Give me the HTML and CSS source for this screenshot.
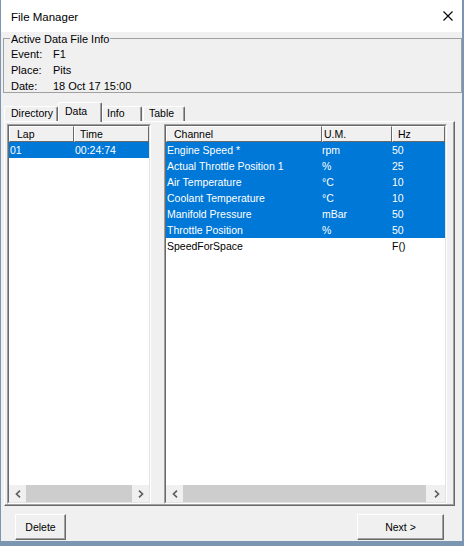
FILE: index.html
```html
<!DOCTYPE html>
<html>
<head>
<meta charset="utf-8">
<link rel="stylesheet" href="styles.css">
</head>
<body>
<div class="win">
  <div class="titlebar">
    <span class="title">File Manager</span>
    <svg class="close" width="10" height="10" viewBox="0 0 10 10"><path d="M0.5 0.5 L9.5 9.5 M9.5 0.5 L0.5 9.5" stroke="#000" stroke-width="1.1" fill="none"/></svg>
  </div>

  <div class="group">
    <span class="legend">Active Data File Info</span>
    <div class="info-row"><span class="lbl">Event:</span><span>F1</span></div>
    <div class="info-row"><span class="lbl">Place:</span><span>Pits</span></div>
    <div class="info-row"><span class="lbl">Date:</span><span>18 Oct 17 15:00</span></div>
  </div>

  <div class="tabs">
    <div class="tab t-dir">Directory</div>
    <div class="tab t-data sel">Data</div>
    <div class="tab t-info">Info</div>
    <div class="tab t-table">Table</div>
  </div>

  <div class="panel">
    <div class="list list-laps">
      <div class="list-in">
        <div class="lhead">
          <div class="hc hc-lap">Lap</div>
          <div class="hc hc-time">Time</div>
        </div>
        <div class="lbody">
          <div class="row sel"><span class="c-lap">01</span><span class="c-time">00:24:74</span></div>
        </div>
        <div class="hscroll">
          <div class="arrow"><svg width="6" height="8" viewBox="0 0 6 8"><polyline points="5,0.7 1.5,4 5,7.3" fill="none" stroke="#606060" stroke-width="1.7"/></svg></div>
          <div class="thumb"></div>
          <div class="arrow"><svg width="6" height="8" viewBox="0 0 6 8"><polyline points="1,0.7 4.5,4 1,7.3" fill="none" stroke="#606060" stroke-width="1.7"/></svg></div>
        </div>
      </div>
    </div>

    <div class="list list-ch">
      <div class="list-in">
        <div class="lhead">
          <div class="hc hc-ch">Channel</div>
          <div class="hc hc-um">U.M.</div>
          <div class="hc hc-hz">Hz</div>
        </div>
        <div class="lbody">
          <div class="row sel"><span class="c-ch">Engine Speed *</span><span class="c-um">rpm</span><span class="c-hz">50</span></div>
          <div class="row sel"><span class="c-ch">Actual Throttle Position 1</span><span class="c-um">%</span><span class="c-hz">25</span></div>
          <div class="row sel"><span class="c-ch">Air Temperature</span><span class="c-um">°C</span><span class="c-hz">10</span></div>
          <div class="row sel"><span class="c-ch">Coolant Temperature</span><span class="c-um">°C</span><span class="c-hz">10</span></div>
          <div class="row sel"><span class="c-ch">Manifold Pressure</span><span class="c-um">mBar</span><span class="c-hz">50</span></div>
          <div class="row sel"><span class="c-ch">Throttle Position</span><span class="c-um">%</span><span class="c-hz">50</span></div>
          <div class="row"><span class="c-ch">SpeedForSpace</span><span class="c-um"></span><span class="c-hz">F()</span></div>
        </div>
        <div class="hscroll">
          <div class="arrow"><svg width="6" height="8" viewBox="0 0 6 8"><polyline points="5,0.7 1.5,4 5,7.3" fill="none" stroke="#606060" stroke-width="1.7"/></svg></div>
          <div class="thumb thumb-ch"></div>
          <div class="arrow"><svg width="6" height="8" viewBox="0 0 6 8"><polyline points="1,0.7 4.5,4 1,7.3" fill="none" stroke="#606060" stroke-width="1.7"/></svg></div>
        </div>
      </div>
    </div>
  </div>

  <div class="buttons">
    <button class="btn btn-delete">Delete</button>
    <button class="btn btn-next">Next &gt;</button>
  </div>
</div>
</body>
</html>
```

FILE: styles.css
```css
html, body {
  margin: 0;
  padding: 0;
  background: #f0f0f0;
}

.win {
  width: 464px;
  height: 546px;
  box-sizing: border-box;
  border-left: 1px solid #7a96b0;
  border-right: 2px solid #7a96b0;
  border-bottom: 5px solid #7a96b0;
  background: #f0f0f0;
  display: flex;
  flex-direction: column;
  font-family: "Liberation Sans", Arial, sans-serif;
  color: #000;
}

/* title bar */
.titlebar {
  height: 32px;
  flex: none;
  background: #fff;
  display: flex;
  align-items: center;
  justify-content: space-between;
  padding: 0 9px 0 10px;
}
.title {
  font-size: 11.5px;
  line-height: 14px;
  padding-top: 1px;
}
.close {
  display: block;
  margin-top: -1px;
}

/* group box */
.group {
  position: relative;
  flex: none;
  margin: 6px 0 0 2px;
  height: 55px;
  box-sizing: border-box;
  border: 1px solid #a0a0a0;
  padding: 7px 0 0 7px;
  font-size: 11px;
}
.legend {
  position: absolute;
  top: -6px;
  left: 6px;
  padding: 0 1px;
  line-height: 13px;
  background: #f0f0f0;
}
.info-row {
  display: flex;
  line-height: 16px;
  height: 16px;
}
.lbl {
  width: 42px;
}

/* tabs */
.tabs {
  flex: none;
  display: flex;
  align-items: flex-end;
  height: 19px;
  margin: 9px 0 0 3px;
  font-size: 10.5px;
}
.tab {
  box-sizing: border-box;
  height: 15px;
  line-height: 13px;
  border-top: 1px solid #fff;
  border-left: 1px solid #fff;
  border-right: 1px solid #696969;
  box-shadow: inset -1px 0 #a0a0a0;
  border-radius: 2px 2px 0 0;
  background: #f0f0f0;
}
.tab.sel {
  position: relative;
  z-index: 1;
  height: 20px;
  margin-bottom: -1px;
  line-height: 17px;
}
.t-dir { width: 54px; padding-left: 6px; }
.t-data { width: 44px; padding-left: 6px; }
.t-info { width: 40px; padding-left: 4px; }
.t-table { width: 42px; padding-left: 5px; margin-left: 1px; }

/* panel */
.panel {
  flex: none;
  box-sizing: border-box;
  width: 451px;
  height: 385px;
  margin-left: 3px;
  border-top: 1px solid #fff;
  border-left: 1px solid #fff;
  border-right: 1px solid #696969;
  border-bottom: 1px solid #696969;
  box-shadow: inset -1px -1px #a0a0a0;
  padding: 2px 0 0 2px;
  display: flex;
  gap: 13px;
  align-items: flex-start;
}

.list {
  box-sizing: border-box;
  height: 380px;
  border-top: 1px solid #a0a0a0;
  border-left: 1px solid #a0a0a0;
  border-right: 1px solid #fff;
  border-bottom: 1px solid #fff;
}
.list-laps { width: 144px; }
.list-ch { width: 283px; }

.list-in {
  box-sizing: border-box;
  height: 100%;
  border-top: 1px solid #696969;
  border-left: 1px solid #696969;
  border-right: 1px solid #e3e3e3;
  border-bottom: 1px solid #e3e3e3;
  background: #fff;
  display: flex;
  flex-direction: column;
  font-size: 10.5px;
}

.lhead {
  flex: none;
  display: flex;
  height: 16px;
  background: #f0f0f0;
}
.hc {
  box-sizing: border-box;
  height: 16px;
  line-height: 14px;
  border-top: 1px solid #fff;
  border-left: 1px solid #fff;
  border-right: 1px solid #696969;
  border-bottom: 1px solid #696969;
  white-space: nowrap;
}
.hc-lap { width: 65px; padding-left: 7px; }
.hc-time { flex: 1; padding-left: 5px; }
.hc-ch { width: 156px; padding-left: 7px; }
.hc-um { width: 70px; padding-left: 1px; }
.hc-hz { flex: 1; padding-left: 5px; }

.lbody {
  flex: 1;
}
.row {
  display: flex;
  height: 16px;
  line-height: 16px;
  white-space: nowrap;
}
.row.sel {
  background: #0078d7;
  color: #fff;
}
.c-lap { width: 65px; padding-left: 1px; box-sizing: border-box; }
.c-time { flex: 1; padding-left: 1px; }
.c-ch { width: 156px; padding-left: 1px; box-sizing: border-box; }
.c-um { width: 70px; }
.c-hz { flex: 1; }

.hscroll {
  flex: none;
  height: 17px;
  display: flex;
  background: #f0f0f0;
}
.arrow {
  width: 17px;
  flex: none;
  display: flex;
  align-items: center;
  justify-content: center;
}
.arrow svg { display: block; }
.thumb {
  flex: 1;
  background: #cdcdcd;
}
.thumb-ch {
  margin-right: 2px;
}

/* buttons */
.buttons {
  flex: none;
  display: flex;
  justify-content: space-between;
  margin-top: 8px;
  padding: 0 18px 0 14px;
}
.btn {
  box-sizing: border-box;
  height: 26px;
  margin: 0;
  padding: 0;
  font-family: "Liberation Sans", Arial, sans-serif;
  font-size: 10.5px;
  color: #000;
  background: #f0f0f0;
  border-top: 1px solid #fff;
  border-left: 1px solid #fff;
  border-right: 1px solid #696969;
  border-bottom: 1px solid #696969;
  box-shadow: inset -1px -1px #a0a0a0;
  border-radius: 0;
}
.btn-delete { width: 51px; }
.btn-next { width: 87px; }
```
